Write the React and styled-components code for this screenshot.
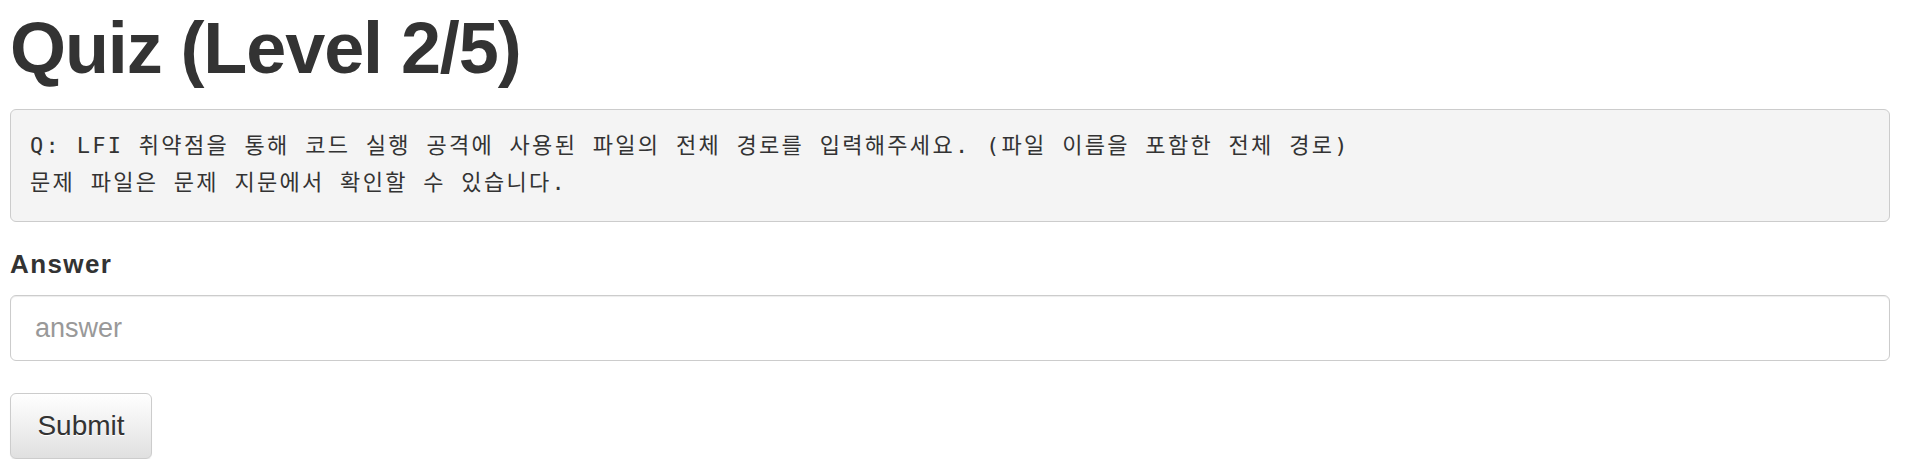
import React from "react";
import styled, { createGlobalStyle } from "styled-components";

const GlobalStyle = createGlobalStyle`
  html, body {
    margin: 0;
    padding: 0;
    background: #ffffff;
  }
  body {
    font-family: "Liberation Sans", Arial, "Noto Sans CJK KR", sans-serif;
    color: #333333;
  }
  * { box-sizing: border-box; }
`;

const Page = styled.main`
  display: flex;
  flex-direction: column;
  align-items: stretch;
  padding: 9px 20px 0 10px;
`;

const Title = styled.h1`
  margin: 0 0 21px;
  font-family: "Liberation Sans", Arial, sans-serif;
  font-size: 72px;
  font-weight: 700;
  line-height: 79px;
  letter-spacing: -1.1px;
  color: #333333;
`;

const Question = styled.pre`
  margin: 0 0 27px;
  padding: 17px 19px 20px;
  background: #f4f4f4;
  border: 1px solid #cccccc;
  border-radius: 6px;
  font-family: "DejaVu Sans Mono", "Noto Sans CJK KR", monospace;
  font-size: 22px;
  line-height: 37px;
  letter-spacing: 2.3px;
  color: #333333;
  white-space: pre-wrap;
`;

const Form = styled.form`
  display: flex;
  flex-direction: column;
  align-items: stretch;
`;

const Label = styled.label`
  display: block;
  margin: 0 0 16px;
  font-size: 26px;
  font-weight: 700;
  line-height: 30px;
  letter-spacing: 1.4px;
  color: #333333;
`;

const AnswerInput = styled.input`
  display: block;
  width: 100%;
  height: 66px;
  margin: 0 0 32px;
  padding: 0 24px;
  font-family: "Liberation Sans", Arial, sans-serif;
  font-size: 27px;
  color: #555555;
  background: #ffffff;
  border: 1px solid #cccccc;
  border-radius: 6px;
  box-shadow: inset 0 1px 1px rgba(0, 0, 0, 0.075);
  outline: none;

  &::placeholder {
    color: #999999;
  }
`;

const SubmitButton = styled.button`
  align-self: flex-start;
  width: 142px;
  height: 66px;
  padding: 0 26px;
  font-family: "Liberation Sans", Arial, sans-serif;
  font-size: 28px;
  color: #333333;
  text-shadow: 0 1px 0 #ffffff;
  background: linear-gradient(to bottom, #ffffff 0%, #e0e0e0 100%);
  border: 1px solid #cccccc;
  border-radius: 6px;
  box-shadow: inset 0 1px 0 rgba(255, 255, 255, 0.15), 0 1px 1px rgba(0, 0, 0, 0.075);
  cursor: pointer;
`;

const questionText =
  "Q: LFI 취약점을 통해 코드 실행 공격에 사용된 파일의 전체 경로를 입력해주세요. (파일 이름을 포함한 전체 경로)\n문제 파일은 문제 지문에서 확인할 수 있습니다.";

export default function App() {
  return (
    <>
      <GlobalStyle />
      <Page>
        <Title>Quiz (Level 2/5)</Title>
        <Question>{questionText}</Question>
        <Form onSubmit={(e) => e.preventDefault()}>
          <Label htmlFor="answer">Answer</Label>
          <AnswerInput id="answer" type="text" placeholder="answer" />
          <SubmitButton type="submit">Submit</SubmitButton>
        </Form>
      </Page>
    </>
  );
}
